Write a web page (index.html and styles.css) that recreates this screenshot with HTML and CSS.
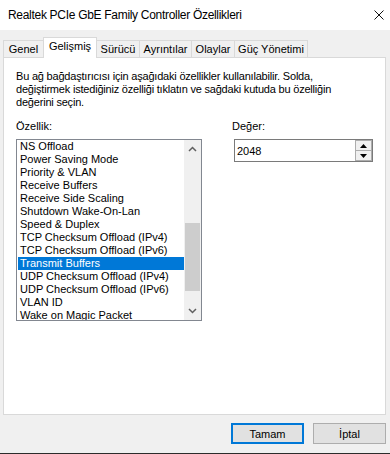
FILE: index.html
```html
<!DOCTYPE html>
<html lang="tr">
<head>
    <meta charset="UTF-8">
    <meta name="viewport" content="width=device-width, initial-scale=1.0">
    <title>Realtek PCIe GbE Family Controller Özellikleri</title>
    <link rel="stylesheet" href="styles.css">
</head>
<body>
<div class="window">
    <div class="titlebar">
        <span class="title">Realtek PCIe GbE Family Controller Özellikleri</span>
        <svg class="close" width="10" height="10" viewBox="0 0 10 10">
            <path d="M0.5 0.5 L9.5 9.5 M9.5 0.5 L0.5 9.5" stroke="#111" stroke-width="1" fill="none"/>
        </svg>
    </div>
    <div class="dialog">
        <div class="tabs">
            <div class="tab tab-genel">Genel</div>
            <div class="tab active">Gelişmiş</div>
            <div class="tab tab-driver">Sürücü</div>
            <div class="tab tab-details">Ayrıntılar</div>
            <div class="tab tab-events">Olaylar</div>
            <div class="tab tab-power">Güç Yönetimi</div>
        </div>
        <div class="panel">
            <p class="intro">Bu ağ bağdaştırıcısı için aşağıdaki özellikler kullanılabilir. Solda,<br>değiştirmek istediğiniz özelliği tıklatın ve sağdaki kutuda bu özelliğin<br>değerini seçin.</p>
            <div class="columns">
                <div class="col-left">
                    <div class="label">Özellik:</div>
                    <div class="listbox">
                        <ul class="items">
                            <li>NS Offload</li>
                            <li>Power Saving Mode</li>
                            <li>Priority &amp; VLAN</li>
                            <li>Receive Buffers</li>
                            <li>Receive Side Scaling</li>
                            <li>Shutdown Wake-On-Lan</li>
                            <li>Speed &amp; Duplex</li>
                            <li>TCP Checksum Offload (IPv4)</li>
                            <li>TCP Checksum Offload (IPv6)</li>
                            <li class="selected">Transmit Buffers</li>
                            <li>UDP Checksum Offload (IPv4)</li>
                            <li>UDP Checksum Offload (IPv6)</li>
                            <li>VLAN ID</li>
                            <li>Wake on Magic Packet</li>
                        </ul>
                        <div class="scrollbar">
                            <svg class="arrow" width="9" height="6" viewBox="0 0 9 6">
                                <path d="M1 5 L4.5 1.5 L8 5" stroke="#606060" stroke-width="1.5" fill="none"/>
                            </svg>
                            <div class="track">
                                <div class="thumb"></div>
                            </div>
                            <svg class="arrow" width="9" height="6" viewBox="0 0 9 6">
                                <path d="M1 1 L4.5 4.5 L8 1" stroke="#606060" stroke-width="1.5" fill="none"/>
                            </svg>
                        </div>
                    </div>
                </div>
                <div class="col-right">
                    <div class="label">Değer:</div>
                    <div class="spinbox">
                        <span class="value">2048</span>
                        <div class="spin">
                            <div class="spin-btn">
                                <svg width="7" height="4" viewBox="0 0 7 4"><path d="M3.5 0 L7 4 L0 4 Z" fill="#000"/></svg>
                            </div>
                            <div class="spin-btn">
                                <svg width="7" height="4" viewBox="0 0 7 4"><path d="M0 0 L7 0 L3.5 4 Z" fill="#000"/></svg>
                            </div>
                        </div>
                    </div>
                </div>
            </div>
        </div>
        <div class="buttons">
            <button class="btn default">Tamam</button>
            <button class="btn">İptal</button>
        </div>
    </div>
</div>
</body>
</html>
```

FILE: styles.css
```css
body {
    margin: 0;
    font-family: "Liberation Sans", Arial, sans-serif;
    font-size: 11px;
    color: #000;
    background-color: #f0f0f0;
}

.window {
    width: 390px;
    height: 454px;
    display: flex;
    flex-direction: column;
    border-bottom: 1px solid #2b2b2b;
    box-sizing: border-box;
}

.titlebar {
    height: 30px;
    background-color: #fff;
    display: flex;
    align-items: center;
    justify-content: space-between;
    padding: 0 6px 0 8px;
}

.title {
    font-size: 12px;
    letter-spacing: -0.3px;
    color: #000;
}

.dialog {
    flex: 1;
    background-color: #f0f0f0;
    display: flex;
    flex-direction: column;
}

.tabs {
    display: flex;
    align-items: flex-end;
    height: 27px;
    padding-left: 3px;
    position: relative;
    z-index: 1;
}

.tab {
    height: 16px;
    line-height: 16px;
    border: 1px solid #d9d9d9;
    border-bottom: none;
    border-right: none;
    text-align: center;
    box-sizing: content-box;
}

.tab-genel { width: 39px; }
.tab-driver { width: 42px; }
.tab-details { width: 51px; }
.tab-events { width: 42px; }
.tab-power { width: 72px; border-right: 1px solid #d9d9d9; }

.tab.active {
    width: 52px;
    height: 20px;
    line-height: 17px;
    background-color: #fff;
    border-right: 1px solid #d9d9d9;
    margin-bottom: -1px;
}

.tab.active + .tab {
    border-left: none;
}

.panel {
    margin-left: 3px;
    width: 383px;
    height: 358px;
    background-color: #fff;
    border: 1px solid #d9d9d9;
    padding: 12px 0 0 12px;
    box-sizing: border-box;
}

.intro {
    margin: 0;
    line-height: 13px;
    letter-spacing: -0.2px;
}

.columns {
    display: flex;
    margin-top: 11px;
}

.col-left {
    width: 186px;
}

.col-right {
    width: 141px;
    margin-left: 30px;
}

.label {
    line-height: 13px;
    margin-bottom: 6px;
}

.listbox {
    height: 182px;
    border: 1px solid #828790;
    box-sizing: border-box;
    display: flex;
}

.items {
    list-style: none;
    margin: 0;
    padding: 0 0 0 1px;
    flex: 1;
    overflow: hidden;
}

.items li {
    height: 13px;
    line-height: 13px;
    padding-left: 2px;
    white-space: nowrap;
}

.items li.selected {
    background-color: #0078d7;
    color: #fff;
}

.scrollbar {
    width: 17px;
    background-color: #f0f0f0;
    display: flex;
    flex-direction: column;
    align-items: center;
}

.arrow {
    margin: 6px 0;
    flex: none;
}

.track {
    flex: 1;
    width: 15px;
    padding-top: 65px;
    box-sizing: border-box;
}

.thumb {
    height: 68px;
    background-color: #cdcdcd;
}

.spinbox {
    height: 23px;
    margin-left: 2px;
    border: 1px solid #7a7a7a;
    box-sizing: border-box;
    display: flex;
    align-items: center;
    background-color: #fff;
}

.value {
    flex: 1;
    padding-left: 2px;
}

.spin {
    width: 17px;
    height: 21px;
    display: flex;
    flex-direction: column;
}

.spin-btn {
    flex: 1;
    background-color: #f0f0f0;
    border: 1px solid #adadad;
    display: flex;
    align-items: center;
    justify-content: center;
}

.spin-btn + .spin-btn {
    border-top: none;
}

.buttons {
    display: flex;
    justify-content: flex-end;
    gap: 9px;
    padding: 8px 4px 0 0;
}

.btn {
    width: 73px;
    height: 21px;
    font-family: "Liberation Sans", Arial, sans-serif;
    font-size: 11px;
    color: #000;
    background-color: #e1e1e1;
    border: 1px solid #adadad;
    padding: 0;
}

.btn.default {
    border: 2px solid #0078d7;
}
```
